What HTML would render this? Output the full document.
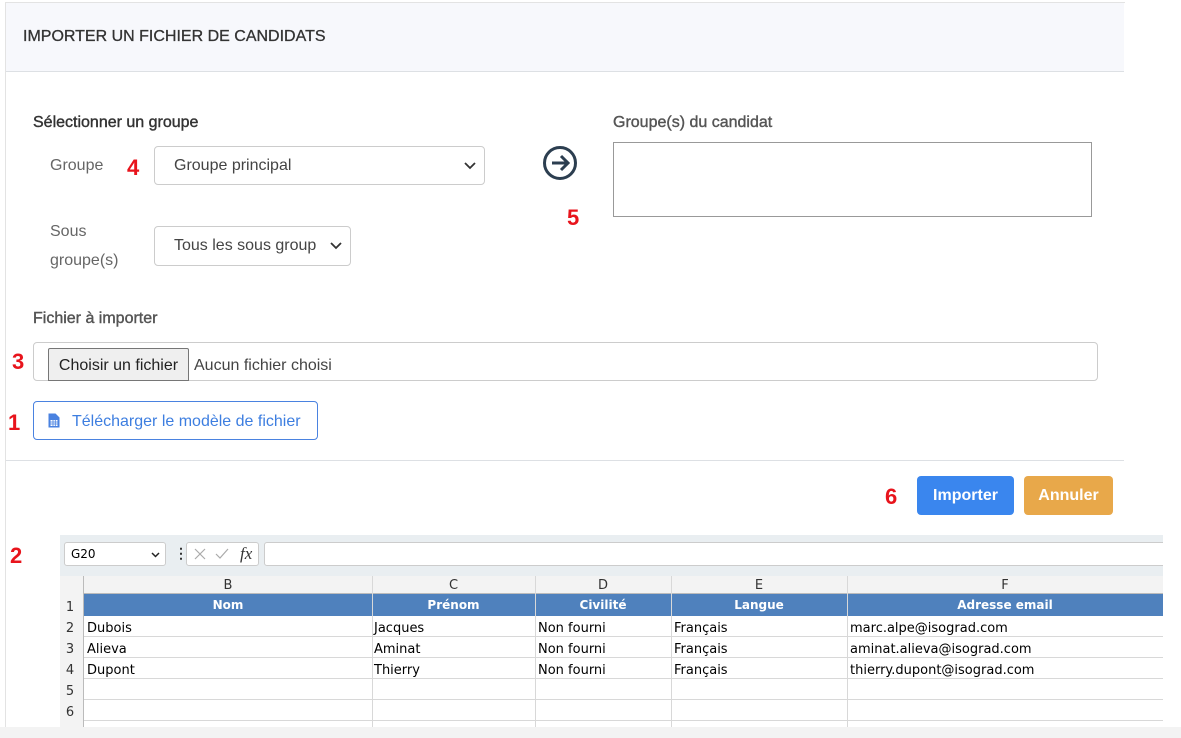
<!DOCTYPE html>
<html><head><meta charset="utf-8"><style>
*{box-sizing:border-box;margin:0;padding:0}
body{width:1181px;height:738px;background:#fff;font-family:"Liberation Sans",sans-serif;position:relative;overflow:hidden;color:#555}
.abs{position:absolute}
.red{color:#e8141c;font-weight:bold;font-size:22px;position:absolute}
.lbl{font-size:16px;color:#666}
.sel{position:absolute;border:1px solid #ccc;border-radius:4px;background:#fff;font-size:16px;color:#444;padding-left:19px;display:flex;align-items:center}
.sel svg{position:absolute;right:8px;top:50%;margin-top:-4px}
.sh{font-family:"DejaVu Sans","Liberation Sans",sans-serif;font-size:13px;color:#000}
</style></head><body>
<div class="abs" style="left:5px;top:2px;width:1120px;height:725px;border-left:1px solid #e3e3e3;border-top:1px solid #e3e3e3"></div>
<div class="abs" style="left:6px;top:3px;width:1118px;height:69px;background:#f7f8fc;border-bottom:1px solid #dde0e4"></div>
<div class="abs" style="left:23px;top:28px;font-size:16px;color:#333;-webkit-text-stroke:0.3px #333">IMPORTER UN FICHIER DE CANDIDATS</div>
<div class="abs" style="left:33px;top:114px;font-size:16px;color:#333;-webkit-text-stroke:0.4px #333">Sélectionner un groupe</div>
<div class="abs lbl" style="left:50px;top:157px">Groupe</div>
<div class="red" style="left:127px;top:155px">4</div>
<div class="sel" style="left:154px;top:146px;width:331px;height:39px">Groupe principal<svg width="12" height="8"><path d="M1 1l5 5 5-5" stroke="#333" stroke-width="1.8" fill="none"/></svg></div>
<div class="abs lbl" style="left:50px;top:217px;line-height:29px">Sous<br>groupe(s)</div>
<div class="sel" style="left:154px;top:226px;width:197px;height:40px;overflow:hidden;white-space:nowrap">Tous les sous group<svg width="12" height="8" style="background:#fff"><path d="M1 1l5 5 5-5" stroke="#333" stroke-width="1.8" fill="none"/></svg></div>
<svg class="abs" style="left:542px;top:145px" width="36" height="36"><circle cx="18" cy="18" r="15.5" stroke="#2c3e50" stroke-width="3" fill="none"/><path d="M10 18h15M19 11l7 7-7 7" stroke="#2c3e50" stroke-width="3" fill="none"/></svg>
<div class="red" style="left:567px;top:205px">5</div>
<div class="abs" style="left:613px;top:114px;font-size:16px;color:#555;-webkit-text-stroke:0.4px #555">Groupe(s) du candidat</div>
<div class="abs" style="left:613px;top:142px;width:479px;height:75px;border:1px solid #999"></div>
<div class="abs" style="left:33px;top:310px;font-size:16px;color:#555;-webkit-text-stroke:0.4px #555">Fichier à importer</div>
<div class="red" style="left:12px;top:349px">3</div>
<div class="abs" style="left:33px;top:342px;width:1065px;height:39px;border:1px solid #ccc;border-radius:4px"></div>
<div class="abs" style="left:48px;top:348px;width:141px;height:33px;border:1px solid #767676;background:#efefef;font-size:16px;color:#222;text-align:center;line-height:33px;border-radius:2px 2px 0 0">Choisir un fichier</div>
<div class="abs" style="left:194px;top:357px;font-size:16px;color:#444">Aucun fichier choisi</div>
<div class="red" style="left:8px;top:410px">1</div>
<div class="abs" style="left:33px;top:401px;width:285px;height:39px;border:1px solid #4a82e0;border-radius:4px;color:#3d7ee0;font-size:16px;line-height:40px;padding-left:38px">Télécharger le modèle de fichier</div>
<svg class="abs" style="left:48px;top:413px" width="12" height="15"><path d="M0.5 0.5h7l4 4v10h-11z" fill="#4a82e0"/><rect x="2.5" y="7" width="7" height="6" fill="#fff"/><path d="M2.5 9h7M2.5 11h7M5 7v6M7.3 7v6" stroke="#4a82e0" stroke-width="0.8"/></svg>
<div class="abs" style="left:6px;top:460px;width:1118px;height:1px;background:#dde0e4"></div>
<div class="red" style="left:885px;top:484px">6</div>
<div class="abs" style="left:917px;top:476px;width:97px;height:39px;background:#3a86ee;border-radius:4px;color:#fff;font-weight:bold;font-size:16px;text-align:center;line-height:40px">Importer</div>
<div class="abs" style="left:1024px;top:476px;width:89px;height:39px;background:#e8a84a;border-radius:4px;color:#fff;font-weight:bold;font-size:16px;text-align:center;line-height:40px">Annuler</div>
<div class="red" style="left:10px;top:543px">2</div>
<div class="abs" style="left:0;top:727px;width:1181px;height:11px;background:#f3f3f3"></div>
<!-- spreadsheet -->
<div class="abs" style="left:60px;top:535px;width:1103px;height:192px;background:#fff;overflow:hidden">
<div class="abs" style="left:0;top:0;width:1103px;height:41px;background:#e9eef1"></div>
<div class="abs sh" style="left:4px;top:7px;width:102px;height:24px;background:#fff;border:1px solid #ccc;border-radius:3px;font-size:12px;padding:4px 6px">G20<svg style="position:absolute;right:5px;top:9px" width="9" height="6"><path d="M1 1l3.5 3.5L8 1" stroke="#222" stroke-width="1.5" fill="none"/></svg></div>
<div class="abs" style="left:114px;top:10px;color:#333;font-size:14px;font-weight:bold">⋮</div>
<div class="abs" style="left:126px;top:7px;width:73px;height:24px;background:#fff;border:1px solid #ccc;border-radius:3px"><svg width="73" height="22"><path d="M8 6l10 10M18 6L8 16" stroke="#aaa" stroke-width="1.2"/><path d="M29 11l4 4 8-9" stroke="#aaa" stroke-width="1.2" fill="none"/></svg><span style="position:absolute;left:53px;top:1px;font-family:'Liberation Serif',serif;font-style:italic;font-size:17px;color:#333">fx</span></div>
<div class="abs" style="left:204px;top:7px;width:905px;height:24px;background:#fff;border:1px solid #ccc;border-radius:3px"></div>
<div class="abs" style="left:0;top:41px;width:1103px;height:18px;background:#f3f3f3;border-bottom:1px solid #bbb"></div>
<div class="abs" style="left:0;top:41px;width:24px;height:151px;background:#f3f3f3;border-right:1px solid #bbb"></div>
<div class="abs sh" style="top:43px;left:24px;width:288px;text-align:center;color:#333">B</div>
<div class="abs sh" style="top:43px;left:312px;width:163px;text-align:center;color:#333">C</div>
<div class="abs sh" style="top:43px;left:475px;width:136px;text-align:center;color:#333">D</div>
<div class="abs sh" style="top:43px;left:611px;width:176px;text-align:center;color:#333">E</div>
<div class="abs sh" style="top:43px;left:787px;width:316px;text-align:center;color:#333">F</div>
<div class="abs" style="left:24px;top:59px;width:1079px;height:22px;background:#4f81bd"></div>
<div class="abs sh" style="top:63px;left:24px;width:288px;text-align:center;color:#fff;font-weight:bold;font-size:12px">Nom</div>
<div class="abs sh" style="top:63px;left:312px;width:163px;text-align:center;color:#fff;font-weight:bold;font-size:12px">Prénom</div>
<div class="abs sh" style="top:63px;left:475px;width:136px;text-align:center;color:#fff;font-weight:bold;font-size:12px">Civilité</div>
<div class="abs sh" style="top:63px;left:611px;width:176px;text-align:center;color:#fff;font-weight:bold;font-size:12px">Langue</div>
<div class="abs sh" style="top:63px;left:787px;width:316px;text-align:center;color:#fff;font-weight:bold;font-size:12px">Adresse email</div>
<div class="abs" style="left:24px;top:81px;width:1079px;height:111px;background:repeating-linear-gradient(#fff 0 20px,#d8d8d8 20px 21px)"></div>
<div class="abs" style="left:312px;top:41px;width:1px;height:151px;background:#d8d8d8"></div>
<div class="abs" style="left:475px;top:41px;width:1px;height:151px;background:#d8d8d8"></div>
<div class="abs" style="left:611px;top:41px;width:1px;height:151px;background:#d8d8d8"></div>
<div class="abs" style="left:787px;top:41px;width:1px;height:151px;background:#d8d8d8"></div>
<div class="abs sh" style="left:0;top:62px;width:20px;text-align:center;color:#333;line-height:21px">1<br>2<br>3<br>4<br>5<br>6</div>
<div class="abs sh" style="left:27px;top:83px;line-height:21px">Dubois<br>Alieva<br>Dupont</div>
<div class="abs sh" style="left:314px;top:83px;line-height:21px">Jacques<br>Aminat<br>Thierry</div>
<div class="abs sh" style="left:478px;top:83px;line-height:21px">Non fourni<br>Non fourni<br>Non fourni</div>
<div class="abs sh" style="left:614px;top:83px;line-height:21px">Français<br>Français<br>Français</div>
<div class="abs sh" style="left:790px;top:83px;line-height:21px">marc.alpe@isograd.com<br>aminat.alieva@isograd.com<br>thierry.dupont@isograd.com</div>
</div>
</body></html>
